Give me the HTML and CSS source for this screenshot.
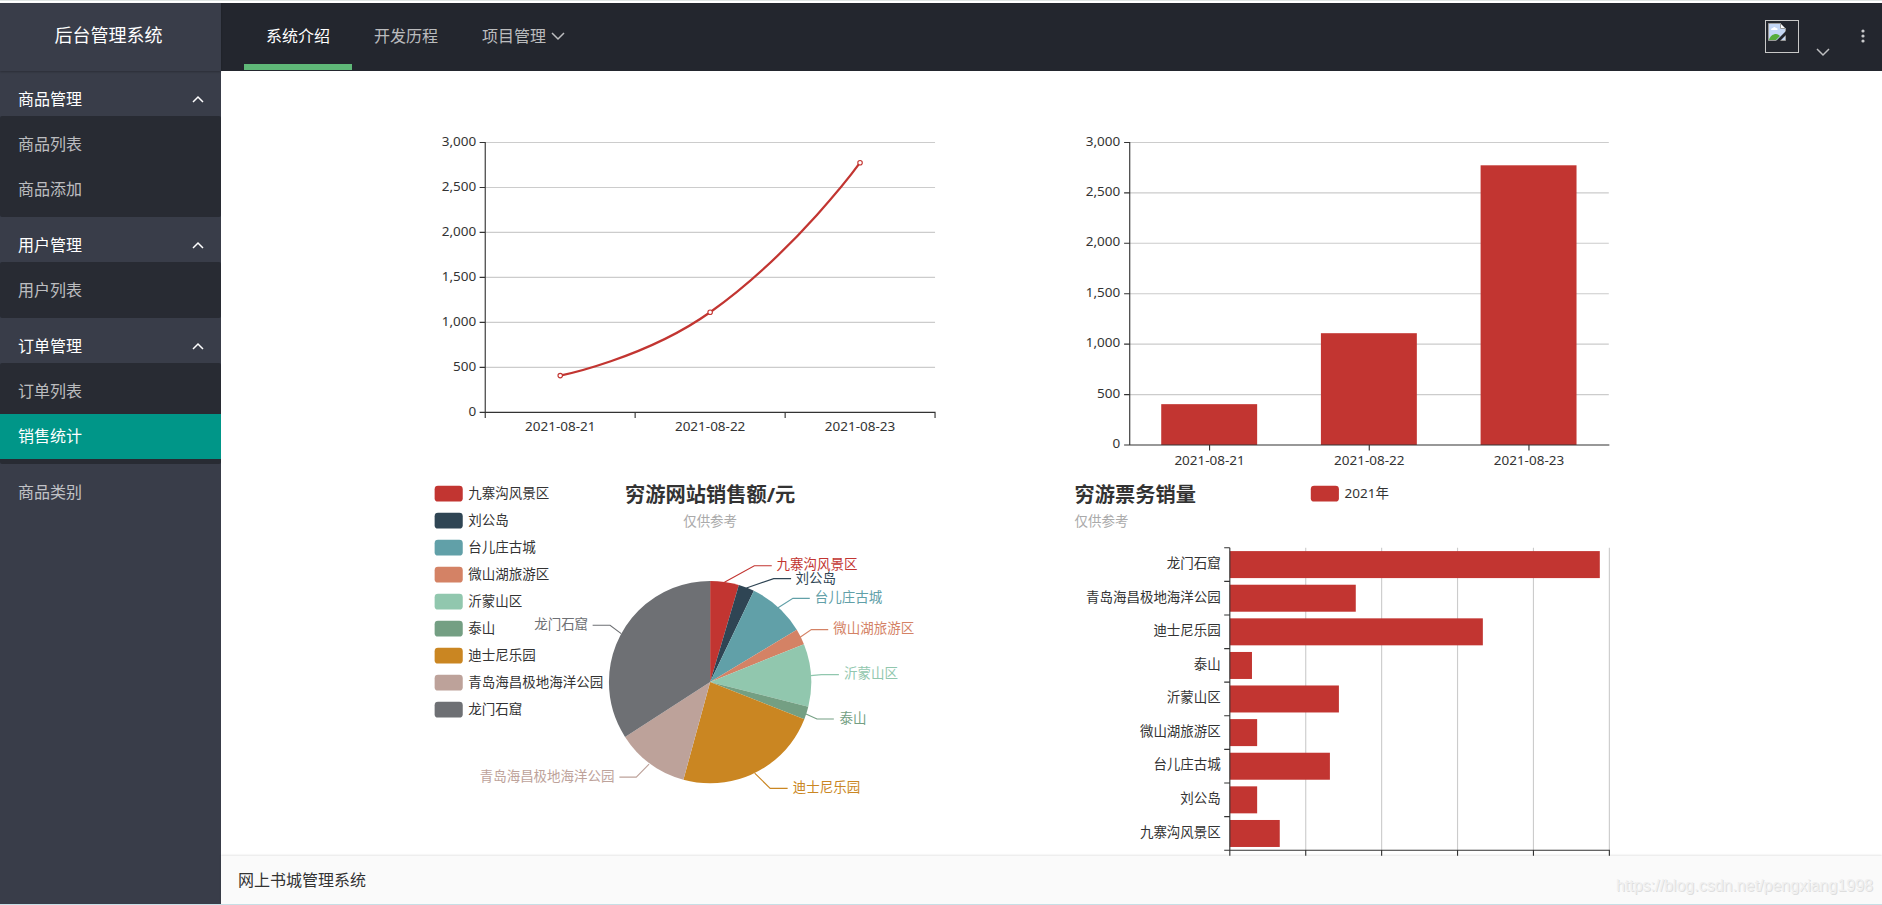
FILE: index.html
```html
<!DOCTYPE html>
<html lang="zh-CN">
<head>
<meta charset="utf-8">
<title>后台管理系统</title>
<link rel="stylesheet" href="styles.css">
</head>
<body>
<svg class="defs" aria-hidden="true">
  <symbol id="chev-down" viewBox="0 0 14 14"><path d="M1 4l6 6 6-6"/></symbol>
  <symbol id="chev-up" viewBox="0 0 14 14"><path d="M2 10l5-5 5 5"/></symbol>
</svg>
<div class="layout">
  <div class="logo">后台管理系统</div>
  <header class="header">
    <nav class="topnav">
      <a class="topnav-item active" href="#">系统介绍</a>
      <a class="topnav-item" href="#">开发历程</a>
      <a class="topnav-item" href="#">项目管理<svg class="chev"><use href="#chev-down"/></svg></a>
    </nav>
    <div class="tools">
      <a class="user" href="#" aria-label="用户">
        <span class="avatar">
          <svg viewBox="0 0 18 18" class="broken">
            <path fill="#c4d7f5" stroke="#9a9a9a" d="M.5.5h12l5 5v12H.5z"/>
            <path fill="#fff" d="M3 7c0-2 2-2 2-2s1-2 3 0c2 0 2 2 1 2z"/>
            <path fill="#56ad3b" d="M1 17c1-4 4-6 7-6 2 0 3 1 4 2l-4 4z"/>
            <path fill="#fff" stroke="#9a9a9a" d="M12.500.5v5h5z"/>
            <path fill="#23262e" d="M18 8v4l-6 6H8z"/>
          </svg>
        </span>
        <svg class="chev user-chev"><use href="#chev-down"/></svg>
      </a>
      <button class="more" type="button" aria-label="更多"><svg viewBox="0 0 4 14"><circle cx="2" cy="2" r="1.600"/><circle cx="2" cy="7" r="1.600"/><circle cx="2" cy="12" r="1.600"/></svg></button>
    </div>
  </header>

  <aside class="side">
    <a class="group" href="#">商品管理<svg class="chev"><use href="#chev-up"/></svg></a>
    <div class="sub">
      <a href="#">商品列表</a>
      <a href="#">商品添加</a>
    </div>
    <a class="group" href="#">用户管理<svg class="chev"><use href="#chev-up"/></svg></a>
    <div class="sub">
      <a href="#">用户列表</a>
    </div>
    <a class="group" href="#">订单管理<svg class="chev"><use href="#chev-up"/></svg></a>
    <div class="sub">
      <a href="#">订单列表</a>
      <a class="current" href="#">销售统计</a>
    </div>
    <a class="group plain" href="#">商品类别</a>
  </aside>

  <main class="main">
    <svg class="chart" viewBox="0 0 500 358">
      <path class="grid" d="M50 60H450M50 100H450M50 140H450M50 180H450M50 220H450M50 260H450"/>
      <path class="axis" d="M50 59.500V305M45 300H450.500M45 60h5M45 100h5M45 140h5M45 180h5M45 220h5M45 260h5M183.300 300v5M316.700 300v5M450 300v5"/>
      <g class="end">
        <text x="42" y="63">3,000</text><text x="42" y="103">2,500</text><text x="42" y="143">2,000</text>
        <text x="42" y="183">1,500</text><text x="42" y="223">1,000</text><text x="42" y="263">500</text><text x="42" y="303">0</text>
      </g>
      <g class="mid">
        <text x="116.700" y="317">2021-08-21</text><text x="250" y="317">2021-08-22</text><text x="383.300" y="317">2021-08-23</text>
      </g>
      <path class="line" d="M116.700 267.300C116.700 267.300 192.100 252.100 250 211C325.500 157.400 383.300 78 383.300 78"/>
      <g class="dots"><circle cx="116.700" cy="267.300" r="2"/><circle cx="250" cy="211" r="2"/><circle cx="383.300" cy="78" r="2"/></g>
    </svg>

    <svg class="chart" viewBox="0 0 500 358">
      <path class="grid" d="M54 60H480M54 104.800H480M54 149.600H480M54 194.500H480M54 239.300H480M54 284.200H480"/>
      <g class="bars"><rect x="82" y="292.700" width="85.300" height="36.300"/><rect x="224" y="229.600" width="85.300" height="99.400"/><rect x="366" y="80.300" width="85.300" height="248.700"/></g>
      <path class="axis" d="M54 59.500V329M49 329H480.500M49 60h5M49 104.800h5M49 149.600h5M49 194.500h5M49 239.300h5M49 284.200h5M125 329v5M267 329v5M409 329v5"/>
      <g class="end">
        <text x="45.500" y="63">3,000</text><text x="45.500" y="107.500">2,500</text><text x="45.500" y="152">2,000</text>
        <text x="45.500" y="197">1,500</text><text x="45.500" y="242">1,000</text><text x="45.500" y="287">500</text><text x="45.500" y="331.500">0</text>
      </g>
      <g class="mid">
        <text x="125" y="346.500">2021-08-21</text><text x="267" y="346.500">2021-08-22</text><text x="409" y="346.500">2021-08-23</text>
      </g>
    </svg>

    <svg class="chart" viewBox="0 0 500 358">
      <g class="mid"><text class="title" x="250" y="21">穷游网站销售额/元</text><text class="subtitle" x="250" y="43">仅供参考</text></g>
      <g>
        <rect class="c1" x="5" y="7" width="25" height="14" rx="3"/><text x="35" y="17.500">九寨沟风景区</text>
        <rect class="c2" x="5" y="31" width="25" height="14" rx="3"/><text x="35" y="41.500">刘公岛</text>
        <rect class="c3" x="5" y="55" width="25" height="14" rx="3"/><text x="35" y="65.500">台儿庄古城</text>
        <rect class="c4" x="5" y="79" width="25" height="14" rx="3"/><text x="35" y="89.500">微山湖旅游区</text>
        <rect class="c5" x="5" y="103" width="25" height="14" rx="3"/><text x="35" y="113.500">沂蒙山区</text>
        <rect class="c6" x="5" y="127" width="25" height="14" rx="3"/><text x="35" y="137.500">泰山</text>
        <rect class="c7" x="5" y="151" width="25" height="14" rx="3"/><text x="35" y="161.500">迪士尼乐园</text>
        <rect class="c8" x="5" y="175" width="25" height="14" rx="3"/><text x="35" y="185.500">青岛海昌极地海洋公园</text>
        <rect class="c9" x="5" y="199" width="25" height="14" rx="3"/><text x="35" y="209.500">龙门石窟</text>
      </g>
      <g class="pie" transform="translate(250 181.500) rotate(-90)">
        <circle class="s1" r="45" pathLength="2935" stroke-dasharray="135 2800"/>
        <circle class="s2" r="45" pathLength="2935" stroke-dasharray="74 2861" stroke-dashoffset="-135"/>
        <circle class="s3" r="45" pathLength="2935" stroke-dasharray="271 2664" stroke-dashoffset="-209"/>
        <circle class="s4" r="45" pathLength="2935" stroke-dasharray="74 2861" stroke-dashoffset="-480"/>
        <circle class="s5" r="45" pathLength="2935" stroke-dasharray="295 2640" stroke-dashoffset="-554"/>
        <circle class="s6" r="45" pathLength="2935" stroke-dasharray="60 2875" stroke-dashoffset="-849"/>
        <circle class="s7" r="45" pathLength="2935" stroke-dasharray="684 2251" stroke-dashoffset="-909"/>
        <circle class="s8" r="45" pathLength="2935" stroke-dasharray="341 2594" stroke-dashoffset="-1593"/>
        <circle class="s9" r="45" pathLength="2935" stroke-dasharray="1001 1934" stroke-dashoffset="-1934"/>
      </g>
      <g class="leaders">
        <path class="s1" d="M262.700 92.700L289.300 78h15.500"/><path class="s2" d="M282.300 97.800L306.500 89.500h15.500"/>
        <path class="s3" d="M310.400 115.300L323.600 107h15"/><path class="s4" d="M330 141.600L340 134.800h15"/>
        <path class="s5" d="M339.500 175.700L349 174.800h15.500"/><path class="s6" d="M335.200 209.800L345 214.300h15"/>
        <path class="s7" d="M289.600 262.500L303.400 276h15.500"/><path class="s8" d="M195.700 254.500L184.300 266h-15"/>
        <path class="s9" d="M170.900 138.400L161 131h-15.500"/>
      </g>
      <g>
        <text class="c1" x="309" y="80.500">九寨沟风景区</text><text class="c2" x="326" y="93.500">刘公岛</text>
        <text class="c3" x="343" y="110.500">台儿庄古城</text><text class="c4" x="359.500" y="138">微山湖旅游区</text>
        <text class="c5" x="369" y="178">沂蒙山区</text><text class="c6" x="365" y="218">泰山</text>
        <text class="c7" x="323.500" y="279.500">迪士尼乐园</text>
      </g>
      <g class="end"><text class="c8" x="165" y="269.500">青岛海昌极地海洋公园</text><text class="c9" x="141.500" y="134.500">龙门石窟</text></g>
    </svg>

    <svg class="chart" viewBox="0 0 500 358">
      <text class="title" x="5" y="21">穷游票务销量</text><text class="subtitle" x="5" y="43">仅供参考</text>
      <rect class="c1" x="215" y="7" width="25" height="14" rx="3"/><text x="245" y="17.500">2021年</text>
      <path class="grid" d="M210.500 62V331M278 62V331M345.500 62V331M413 62V331M480.500 62V331"/>
      <g class="bars">
        <rect x="143" y="65" width="329" height="24"/><rect x="143" y="94.900" width="112" height="24"/><rect x="143" y="124.800" width="225" height="24"/>
        <rect x="143" y="154.700" width="19.700" height="24"/><rect x="143" y="184.500" width="97" height="24"/><rect x="143" y="214.400" width="24.300" height="24"/>
        <rect x="143" y="244.300" width="89" height="24"/><rect x="143" y="274.200" width="24.300" height="24"/><rect x="143" y="304.100" width="44.400" height="24"/>
      </g>
      <path class="axis" d="M143 62V336M138 331H481M138 62h5M138 91.900h5M138 121.800h5M138 151.700h5M138 181.500h5M138 211.400h5M138 241.300h5M138 271.200h5M138 301.100h5M210.500 331v5M278 331v5M345.500 331v5M413 331v5M480.500 331v5"/>
      <g class="end">
        <text x="135" y="80">龙门石窟</text><text x="135" y="110">青岛海昌极地海洋公园</text><text x="135" y="139.500">迪士尼乐园</text>
        <text x="135" y="169.500">泰山</text><text x="135" y="199.500">沂蒙山区</text><text x="135" y="229.500">微山湖旅游区</text>
        <text x="135" y="259">台儿庄古城</text><text x="135" y="289">刘公岛</text><text x="135" y="319">九寨沟风景区</text>
      </g>
    </svg>
  </main>

  <footer class="footer"><span>网上书城管理系统</span><span class="mark">https://blog.csdn.net/pengxiang1998</span></footer>
</div>
</body>
</html>
```
FILE: styles.css
```css
* { box-sizing: border-box; }
body {
  margin: 0;
  background: #fff;
  color: #333;
  font: 16px/24px "Noto Sans", "Noto Sans CJK SC", sans-serif;
}
a { color: inherit; text-decoration: none; }
.defs { display: none; }

.layout {
  display: grid;
  grid-template-columns: 221px minmax(0, 1fr);
  grid-template-rows: 68px minmax(0, 1fr) 48px;
  height: 100vh;
  padding: 2px 0 0;
  border-top: 1px solid #dfe5e3;
  border-bottom: 1px solid #c8dfe6;
}

.logo {
  background: #393d49;
  color: #fff;
  font-size: 18px;
  line-height: 64px;
  text-align: center;
  padding-right: 4px;
  box-shadow: 0 1px 2px rgba(0, 0, 0, .25);
  z-index: 1;
}

.header {
  display: flex;
  justify-content: space-between;
  background: #23262e;
  color: rgba(255, 255, 255, .7);
}
.topnav { display: flex; padding-left: 23px; }
.topnav-item {
  display: flex;
  align-items: center;
  padding: 4px 22px 6px;
  border-bottom: 0 solid #5fb878;
}
.topnav-item.active {
  color: #fff;
  padding-bottom: 0;
  border-bottom-width: 6px;
  margin-bottom: 1px;
}
.chev {
  width: 14px;
  height: 14px;
  fill: none;
  stroke: currentColor;
  stroke-width: 1.5;
}
.topnav .chev { margin-left: 5px; }

.tools { display: flex; padding-right: 12px; }
.user { display: flex; align-items: flex-start; padding-top: 17px; gap: 17px; }
.avatar { width: 34px; height: 33px; border: 1px solid #c8c8c8; padding: 2px; }
.broken { display: block; width: 18px; height: 18px; }
.user-chev { margin-top: 25px; }
.more {
  width: 14px;
  margin-left: 26px;
  padding: 0 5px;
  border: 0;
  background: none;
  height: 66px;
}
.more svg { display: block; width: 4px; height: 14px; fill: #c8c9cb; }

.side { background: #393d49; grid-row: 2 / 4; color: rgba(255, 255, 255, .7); }
.group {
  display: flex;
  align-items: center;
  justify-content: space-between;
  height: 45px;
  padding: 10px 16px 0 18px;
  color: #fff;
}
.group.plain { color: rgba(255, 255, 255, .7); }
.sub { background: #282b33; padding: 6px 0 5px; border-radius: 2px; }
.sub a { display: block; line-height: 44px; padding: 0 0 1px 18px; }
.sub .current { background: #009688; color: #fff; }

.main {
  display: grid;
  grid-template-columns: minmax(0, 1fr) minmax(0, 1fr);
  grid-auto-rows: max-content;
  column-gap: 78px;
  align-content: start;
  padding: 4px 15.1% 0 12.5%;
  overflow: hidden;
}
.chart { display: block; width: 100%; aspect-ratio: 500 / 358; font-size: 12px; fill: #333; }
.grid { stroke: #ccc; fill: none; }
.axis { stroke: #333; fill: none; }
.end { text-anchor: end; }
.mid { text-anchor: middle; }
.title { font-size: 18px; font-weight: bold; }
.subtitle { fill: #aaa; }
.line { fill: none; stroke: #c23531; stroke-width: 2; }
.dots { fill: #fff; stroke: #c23531; }
.bars { fill: #c23531; }
.pie { fill: none; stroke-width: 90; }
.leaders { fill: none; }

.c1 { fill: #c23531; } .s1 { stroke: #c23531; }
.c2 { fill: #2f4554; } .s2 { stroke: #2f4554; }
.c3 { fill: #61a0a8; } .s3 { stroke: #61a0a8; }
.c4 { fill: #d48265; } .s4 { stroke: #d48265; }
.c5 { fill: #91c7ae; } .s5 { stroke: #91c7ae; }
.c6 { fill: #749f83; } .s6 { stroke: #749f83; }
.c7 { fill: #ca8622; } .s7 { stroke: #ca8622; }
.c8 { fill: #bda29a; } .s8 { stroke: #bda29a; }
.c9 { fill: #6e7074; } .s9 { stroke: #6e7074; }

.footer {
  display: flex;
  align-items: center;
  justify-content: space-between;
  padding: 0 9px 0 17px;
  background: #fafafa;
  box-shadow: 0 -1px 2px rgba(0, 0, 0, .1);
  z-index: 1;
}
.mark {
  padding-top: 12px;
  color: #f0f0f0;
  font: 16px/20px "Liberation Sans", Arial, sans-serif;
  text-shadow: 1px 1px 0 #dedede;
}
```
